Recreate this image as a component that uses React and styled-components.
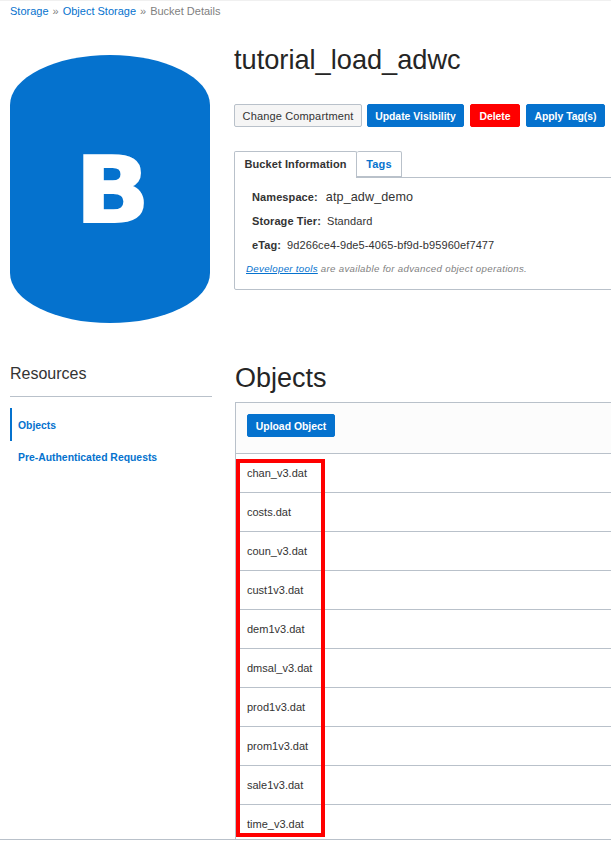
import styled, { createGlobalStyle } from "styled-components";

const GlobalStyle = createGlobalStyle`
  html, body {
    margin: 0;
    padding: 0;
    background: #fff;
    overflow: hidden;
  }
  * {
    box-sizing: border-box;
  }
`;

const Page = styled.div`
  width: 611px;
  height: 841px;
  overflow: hidden;
  font-family: "Liberation Sans", Arial, sans-serif;
  color: #252525;
  border-top: 1px solid #f0f0f0;
`;
const Breadcrumbs = styled.div`
  height: 54px;
  padding: 3px 0 0 10px;
  font-size: 11px;
  line-height: 14px;
  color: #7f7f7f;
  a {
    color: #0572ce;
    text-decoration: none;
  }
  span {
    margin: 0 4px;
  }
`;
const Header = styled.div`
  display: flex;
  height: 302px;
`;
const BucketIcon = styled.div`
  position: relative;
  width: 200px;
  height: 268px;
  margin: 0 24px 0 10px;
  flex: none;
  svg {
    display: block;
  }
  b {
    position: absolute;
    left: 5px;
    right: 0;
    top: 83px;
    text-align: center;
    font-family: "DejaVu Sans", sans-serif;
    font-size: 90px;
    line-height: 106px;
    color: #fff;
    -webkit-text-stroke: 2px #fff;
    transform: scaleX(1.08);
  }
`;
const Details = styled.div`
  flex: 1;
  min-width: 0;
`;
const Title = styled.h1`
  margin: 0;
  height: 49px;
  font-size: 27.2px;
  font-weight: 400;
  line-height: 10px;
  color: #252525;
  white-space: nowrap;
`;
const Actions = styled.div`
  display: flex;
  gap: 6px;
`;
const Button = styled.button`
  width: ${(p) => p.$width}px;
  height: 23px;
  margin-right: ${(p) => (p.$tight ? -1 : 0)}px;
  padding: 1px 0 0;
  border-radius: 2px;
  font-family: inherit;
  font-size: ${(p) => (p.$variant === "default" ? 11 : 10.4)}px;
  font-weight: ${(p) => (p.$variant === "default" ? 400 : 700)};
  letter-spacing: ${(p) => (p.$variant === "default" ? 0.15 : 0)}px;
  white-space: nowrap;
  color: ${(p) => (p.$variant === "default" ? "#333" : "#fff")};
  background: ${(p) =>
    p.$variant === "danger" ? "#ff0000" : p.$variant === "default" ? "#f5f5f5" : "#0572ce"};
  border: 1px solid
    ${(p) =>
      p.$variant === "danger" ? "#ff0000" : p.$variant === "default" ? "#b9c1ca" : "#0572ce"};
`;
const Tabs = styled.div`
  display: flex;
  margin-top: 24px;
  height: 27px;
`;
const Tab = styled.div`
  width: ${(p) => p.$width}px;
  height: ${(p) => (p.$active ? 27 : 26)}px;
  border: 1px solid #b9c1ca;
  border-bottom: ${(p) => (p.$active ? "none" : "1px solid #b9c1ca")};
  border-left: ${(p) => (p.$active ? "1px solid #b9c1ca" : "none")};
  border-radius: 2px 2px 0 0;
  background: #fff;
  text-align: center;
  font-size: 11px;
  font-weight: 700;
  line-height: 25px;
  letter-spacing: 0.1px;
  color: ${(p) => (p.$active ? "#333" : "#0572ce")};
  position: relative;
  z-index: 1;
`;
const InfoPanel = styled.div`
  width: 400px;
  height: 113px;
  margin-top: -1px;
  padding-left: 11px;
  border: 1px solid #b9c1ca;
  border-radius: 0 0 0 2px;
  font-size: 11px;
`;
const InfoRow = styled.div`
  display: flex;
  align-items: center;
  height: 24px;
  padding-left: 6px;
  white-space: nowrap;
  color: #333;
  b {
    margin-right: ${(p) => p.$gap || 6}px;
    letter-spacing: 0.1px;
  }
  span {
    font-size: ${(p) => p.$size || 11}px;
    letter-spacing: 0.1px;
  }
`;
const Rows = styled.div`
  padding-top: 7px;
`;
const Hint = styled.div`
  margin-top: 6px;
  font-size: 9.7px;
  line-height: 12px;
  font-style: italic;
  letter-spacing: 0.3px;
  color: #7f7f7f;
  white-space: nowrap;
  a {
    color: #0572ce;
    text-decoration: underline;
  }
`;
const Main = styled.div`
  display: flex;
  height: 483px;
  overflow: hidden;
  border-bottom: 1px solid #b9c1ca;
`;
const Sidebar = styled.div`
  width: 202px;
  margin: 0 23px 0 10px;
  flex: none;
`;
const SideTitle = styled.h3`
  margin: 0;
  height: 40px;
  padding-top: 8px;
  border-bottom: 1px solid #b9c1ca;
  font-size: 16px;
  font-weight: 400;
  line-height: 18px;
  color: #333;
`;
const SideNav = styled.nav`
  margin-top: 11px;
`;
const SideLink = styled.a`
  display: block;
  height: 33px;
  padding-left: 6px;
  border-left: 2px solid ${(p) => (p.$active ? "#0572ce" : "transparent")};
  font-size: 10.4px;
  font-weight: 700;
  line-height: ${(p) => (p.$active ? 35 : 33)}px;
  color: #0572ce;
`;
const Content = styled.div`
  flex: 1;
  min-width: 0;
`;
const SectionTitle = styled.h2`
  margin: 0;
  height: 45px;
  font-size: 27px;
  font-weight: 400;
  line-height: 42px;
  color: #252525;
`;
const ObjectsBox = styled.div`
  position: relative;
  width: 400px;
  border: 1px solid #b9c1ca;
`;
const Toolbar = styled.div`
  height: 51px;
  padding: 11px;
  background: #fcfcfc;
  border-bottom: 1px solid #b9c1ca;
`;
const ObjectRow = styled.div`
  height: 39px;
  padding-left: 11px;
  border-bottom: 1px solid #b9c1ca;
  font-size: 11px;
  line-height: 38px;
  color: #333;
`;
const Highlight = styled.div`
  position: absolute;
  left: 0;
  top: 56px;
  width: 89px;
  height: 378px;
  border: 4px solid #ff0000;
  pointer-events: none;
`;

const objects = [
  "chan_v3.dat",
  "costs.dat",
  "coun_v3.dat",
  "cust1v3.dat",
  "dem1v3.dat",
  "dmsal_v3.dat",
  "prod1v3.dat",
  "prom1v3.dat",
  "sale1v3.dat",
  "time_v3.dat",
];

const App = () => {
  return (
    <>
      <GlobalStyle />
      <Page>
        <Breadcrumbs>
          <a href="#storage">Storage</a>
          <span>»</span>
          <a href="#object-storage">Object Storage</a>
          <span>»</span>
          Bucket Details
        </Breadcrumbs>
        <Header>
          <BucketIcon>
            <svg width="200" height="268" viewBox="0 0 200 268">
              <path
                d="M0 50 A100 50 0 0 1 200 50 V218 A100 50 0 0 1 0 218 Z"
                fill="#0572ce"
              />
            </svg>
            <b>B</b>
          </BucketIcon>
          <Details>
            <Title>tutorial_load_adwc</Title>
            <Actions>
              <Button $variant="default" $width={128} $tight>Change Compartment</Button>
              <Button $width={97}>Update Visibility</Button>
              <Button $variant="danger" $width={50}>Delete</Button>
              <Button $width={79}>Apply Tag(s)</Button>
            </Actions>
            <Tabs>
              <Tab $active $width={123}>Bucket Information</Tab>
              <Tab $width={45}>Tags</Tab>
            </Tabs>
            <InfoPanel>
              <Rows>
                <InfoRow $gap={8} $size={12.6}>
                  <b>Namespace:</b>
                  <span>atp_adw_demo</span>
                </InfoRow>
                <InfoRow>
                  <b>Storage Tier:</b>
                  <span>Standard</span>
                </InfoRow>
                <InfoRow>
                  <b>eTag:</b>
                  <span>9d266ce4-9de5-4065-bf9d-b95960ef7477</span>
                </InfoRow>
              </Rows>
              <Hint>
                <a href="#tools">Developer tools</a> are available for advanced object operations.
              </Hint>
            </InfoPanel>
          </Details>
        </Header>
        <Main>
          <Sidebar>
            <SideTitle>Resources</SideTitle>
            <SideNav>
              <SideLink $active>Objects</SideLink>
              <SideLink>Pre-Authenticated Requests</SideLink>
            </SideNav>
          </Sidebar>
          <Content>
            <SectionTitle>Objects</SectionTitle>
            <ObjectsBox>
              <Toolbar>
                <Button $width={88}>Upload Object</Button>
              </Toolbar>
              {objects.map((name) => (
                <ObjectRow key={name}>{name}</ObjectRow>
              ))}
              <Highlight />
            </ObjectsBox>
          </Content>
        </Main>
      </Page>
    </>
  );
};

export default App;
